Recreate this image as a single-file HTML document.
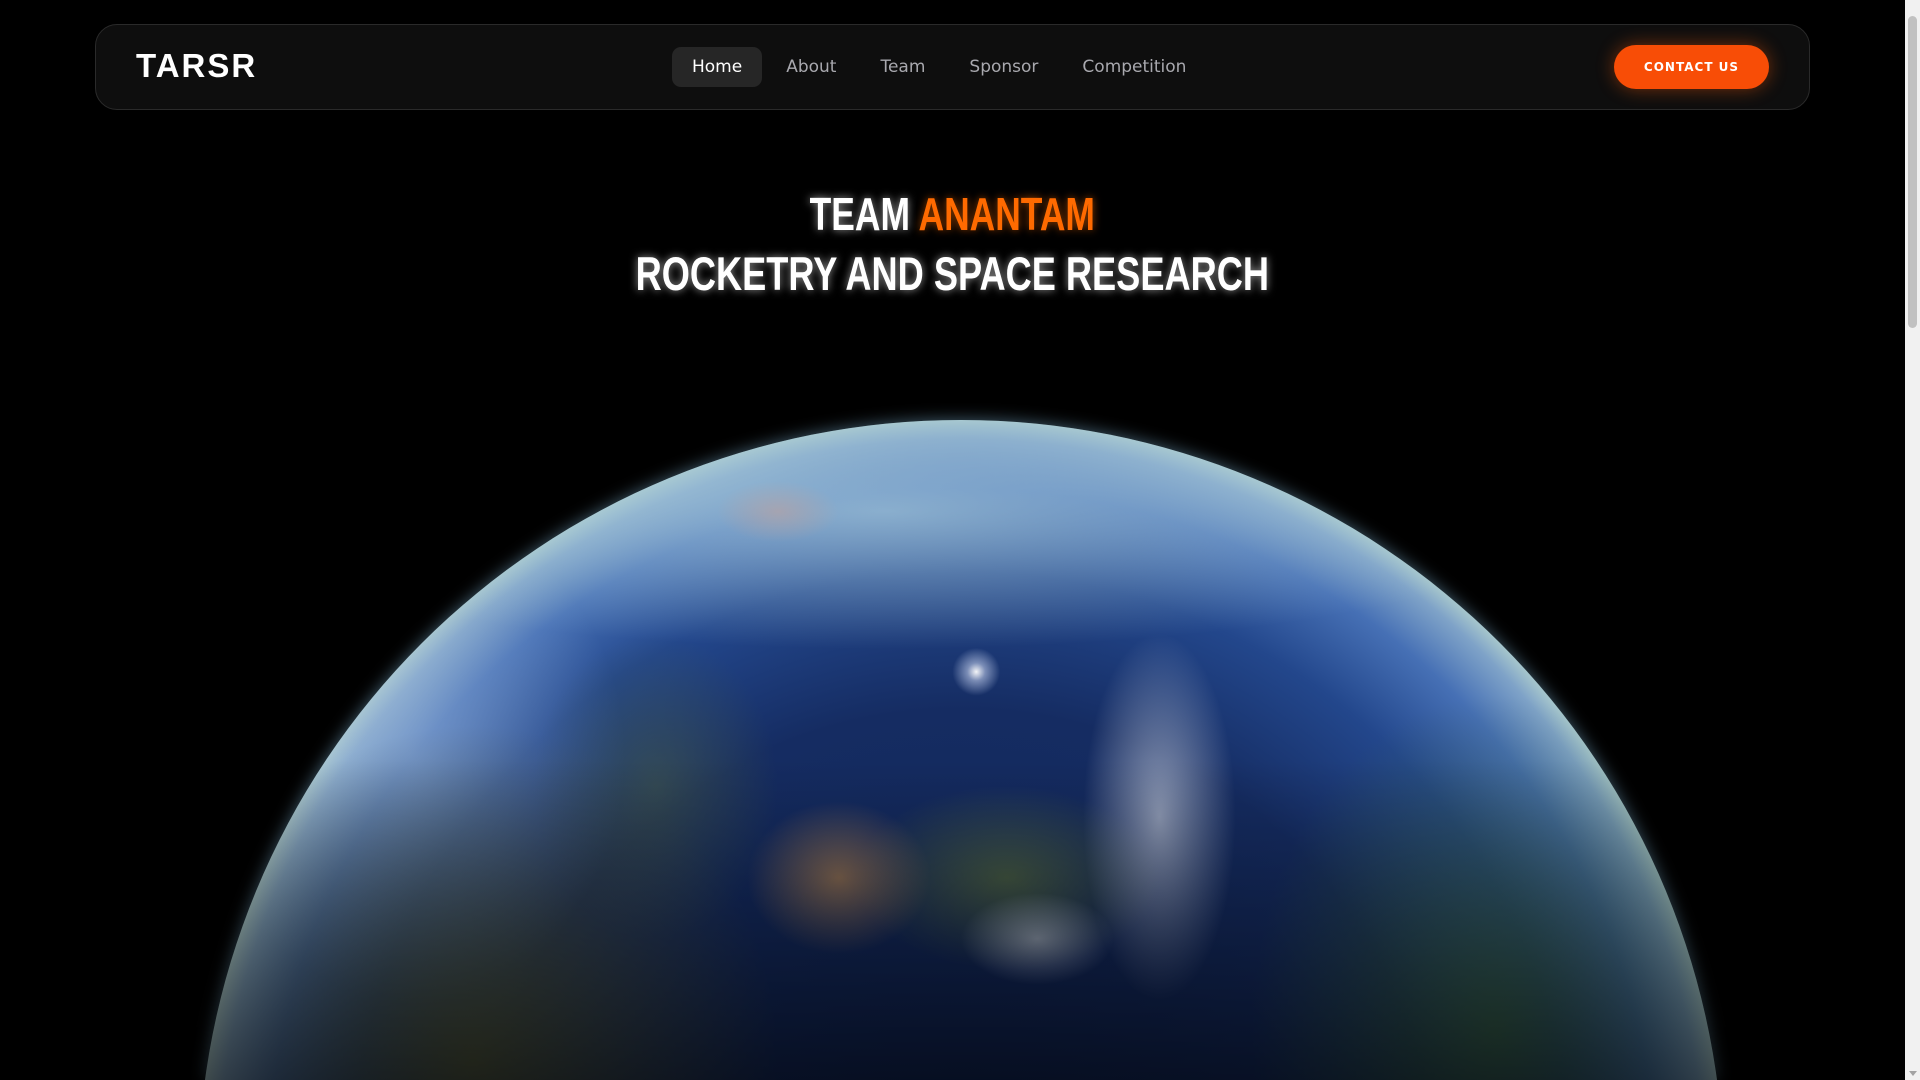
<!DOCTYPE html>
<html><head><meta charset="utf-8"><style>
*{margin:0;padding:0;box-sizing:border-box}
html,body{width:1920px;height:1080px;overflow:hidden;background:#000;font-family:"DejaVu Sans","Liberation Sans",sans-serif}
#w{position:relative;width:1920px;height:1080px;overflow:hidden;background:#000}
.sb{position:absolute;right:0;top:0;width:15px;height:1080px;background:#f1f1f1;z-index:5}
.sb i{position:absolute;left:3px;top:16px;width:9px;height:312px;background:#c1c1c1;border-radius:5px}
.sb b{position:absolute;left:4px;bottom:4px;width:0;height:0;border-left:4px solid transparent;border-right:4px solid transparent;border-top:5px solid #a3a3a3}
.nav{position:absolute;left:95px;top:24px;width:1715px;height:86px;background:#0e0e0e;border:1px solid #2a2a2a;border-radius:22px;z-index:3}
.logo{position:absolute;left:40px;top:22px;font-family:"Liberation Sans",sans-serif;font-size:33px;font-weight:bold;color:#fff;letter-spacing:2px}
.links{position:absolute;left:576px;top:22px;height:40px;display:flex;align-items:center;font-size:17px;color:#a8a8ae}
.links span{padding:0 22px;height:40px;line-height:40px}
.links .on{background:#262626;color:#fff;border-radius:9px;margin-right:2px;padding:0 20px}
.cta{position:absolute;left:1518px;top:20px;width:155px;height:44px;border-radius:22px;background:#f84d06;color:#fff;font-size:12px;font-weight:bold;letter-spacing:1px;text-align:center;line-height:44px;box-shadow:0 0 18px rgba(248,90,10,.45)}
.h{position:absolute;left:0;width:1905px;text-align:center;font-family:"Liberation Sans",sans-serif;font-weight:bold;color:#fff;text-shadow:0 0 10px rgba(255,255,255,.6);z-index:3}
.h span{display:inline-block;transform:scaleX(.77)}
.h1{top:187px;font-size:46px}
.h2{top:246px;font-size:47px}
.or{color:#ff6a00;font-style:normal;text-shadow:0 0 10px rgba(255,110,0,.6)}
.glow{position:absolute;left:198px;top:400px;width:1526px;height:680px;filter:drop-shadow(0 0 8px rgba(120,170,200,.55))}
.earth{width:1526px;height:680px;clip-path:circle(763px at 763px 783px);background-repeat:no-repeat;background-size:1526px 1526px;background-position:0 20px;
background-image:
radial-gradient(circle at 51% 16.5%,rgba(255,255,255,.95) 0,rgba(220,230,255,.5) 0.6%,rgba(255,255,255,0) 1.6%),
radial-gradient(ellipse 5% 12% at 63% 26%,rgba(225,230,240,.6),rgba(225,230,240,0) 100%),
radial-gradient(ellipse 5% 3% at 55% 34%,rgba(225,230,240,.55),rgba(225,230,240,0) 100%),
radial-gradient(ellipse 6% 5% at 42% 30%,rgba(160,120,80,.8),rgba(0,0,0,0) 100%),
radial-gradient(ellipse 10% 6% at 53% 30%,rgba(85,105,60,.75),rgba(0,0,0,0) 100%),
radial-gradient(ellipse 16% 22% at 85% 40%,rgba(55,95,65,.85),rgba(0,0,0,0) 100%),
radial-gradient(ellipse 20% 22% at 18% 42%,rgba(80,85,55,.9),rgba(0,0,0,0) 100%),
radial-gradient(ellipse 8% 10% at 30% 24%,rgba(70,90,70,.6),rgba(0,0,0,0) 100%),
radial-gradient(ellipse 4% 2% at 38% 6%,rgba(200,160,150,.5),rgba(0,0,0,0) 100%),
radial-gradient(ellipse 45% 9% at 45% 6%,rgba(170,205,220,.7),rgba(0,0,0,0) 100%),
radial-gradient(ellipse 14% 16% at 14% 22%,rgba(170,195,225,.45),rgba(0,0,0,0) 100%),
radial-gradient(circle closest-side at 50% 50%,#0f2250 0,#152c62 62%,#23478c 80%,#4670b5 91%,#7fa3c8 97.5%,#a6c6cc 100%)}
.shade{position:absolute;left:0;top:760px;width:1905px;height:320px;background:linear-gradient(rgba(0,0,0,0),rgba(0,0,0,.6))}
</style></head><body><div id="w">
<div class="nav">
<div class="logo">TARSR</div>
<div class="links"><span class="on">Home</span><span>About</span><span>Team</span><span>Sponsor</span><span>Competition</span></div>
<div class="cta">CONTACT US</div>
</div>
<div class="h h1"><span>TEAM <em class="or">ANANTAM</em></span></div>
<div class="h h2"><span>ROCKETRY AND SPACE RESEARCH</span></div>
<div class="glow"><div class="earth"></div></div>
<div class="shade"></div>
<div class="sb"><i></i><b></b></div>
</div></body></html>
